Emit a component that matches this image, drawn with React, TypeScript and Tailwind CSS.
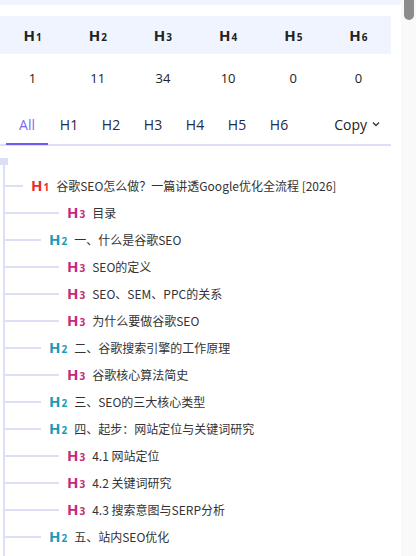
import React, { useState } from 'react';

type Item = { level: 1 | 2 | 3; text: string };

const items: Item[] = [
  { level: 1, text: '谷歌SEO怎么做？一篇讲透Google优化全流程 [2026]' },
  { level: 3, text: '目录' },
  { level: 2, text: '一、什么是谷歌SEO' },
  { level: 3, text: 'SEO的定义' },
  { level: 3, text: 'SEO、SEM、PPC的关系' },
  { level: 3, text: '为什么要做谷歌SEO' },
  { level: 2, text: '二、谷歌搜索引擎的工作原理' },
  { level: 3, text: '谷歌核心算法简史' },
  { level: 2, text: '三、SEO的三大核心类型' },
  { level: 2, text: '四、起步：网站定位与关键词研究' },
  { level: 3, text: '4.1 网站定位' },
  { level: 3, text: '4.2 关键词研究' },
  { level: 3, text: '4.3 搜索意图与SERP分析' },
  { level: 2, text: '五、站内SEO优化' },
];

const counts = [1, 11, 34, 10, 0, 0];
const tabs = ['All', 'H1', 'H2', 'H3', 'H4', 'H5', 'H6'];

const badgeColor: Record<number, string> = {
  1: 'text-[#ee2a2a]',
  2: 'text-[#1a9ab6]',
  3: 'text-[#c6287a]',
};

const lineWidth: Record<number, string> = {
  1: 'w-[18px]',
  2: 'w-[36px]',
  3: 'w-[54px]',
};

const Badge: React.FC<{ n: number; className?: string }> = ({ n, className = '' }) => (
  <span className={`inline-flex items-baseline font-bold leading-none ${className}`}>
    <span className="text-[15px]">H</span>
    <span className="text-[10px] ml-[1px]">{n}</span>
  </span>
);

export default function App() {
  const [active, setActive] = useState('All');

  return (
    <div
      className="flex w-[416px] h-[556px] overflow-hidden bg-white"
      style={{ fontFamily: '"Open Sans", "Noto Sans CJK SC", sans-serif' }}
    >
      <div className="w-[401px] shrink-0">
        <div className="h-[5px] bg-[#eff4fe]"></div>

        <div className="w-[391px] mt-[11px]">
          <div className="grid grid-cols-6 h-[38px] bg-[#eff4fe] items-center">
            {counts.map((_, i) => (
              <div key={i} className="flex justify-center text-[#222]">
                <Badge n={i + 1} />
              </div>
            ))}
          </div>
          <div className="grid grid-cols-6 h-[50px] items-center">
            {counts.map((c, i) => (
              <div key={i} className="text-center text-[13px] text-[#222]">
                {c}
              </div>
            ))}
          </div>

          <div className="flex items-center h-[42px] border-b-2 border-[#dcdff5] text-[14px] text-[#1f2a44]">
            {tabs.map((t) => (
              <button
                key={t}
                onClick={() => setActive(t)}
                className={`h-full w-[42px] -mb-[2px] border-b-2 ${
                  active === t ? 'text-[#7b6cf6] border-[#6c5cf5]' : 'border-transparent'
                } ${t === 'All' ? 'ml-[6px] w-[40px]' : ''}`}
              >
                {t}
              </button>
            ))}
            <div className="ml-auto mr-[10px] flex items-center gap-[4px] text-[#222]">
              <span>Copy</span>
              <svg width="10" height="10" viewBox="0 0 10 10" fill="none">
                <path d="M2 3.5 L5 6.5 L8 3.5" stroke="#333" strokeWidth="1.3" />
              </svg>
            </div>
          </div>

          <div className="mt-[12px]">
            <div className="w-[8px] h-[7px] bg-[#dcdff5]"></div>
            <div className="ml-[3px] border-l-2 border-[#dcdff5] pb-[60px]">
              <div className="h-[7px]"></div>
              {items.map((it, i) => (
                <div key={i} className="flex items-center h-[27px] whitespace-nowrap">
                  <div className={`h-[2px] bg-[#dcdff5] ${lineWidth[it.level]}`}></div>
                  <Badge n={it.level} className={`ml-[8px] ${badgeColor[it.level]}`} />
                  <span
                    className="ml-[7px] text-[12px] text-[#333]"
                    style={{ fontFamily: '"Noto Sans CJK SC", sans-serif' }}
                  >
                    {it.text}
                  </span>
                </div>
              ))}
            </div>
          </div>
        </div>
      </div>

      <div className="w-[15px] bg-[#f9f9f9] flex justify-center">
        <div className="w-[10px] h-[20px] rounded-b-[5px] bg-[#8c8c8c]"></div>
      </div>
    </div>
  );
}
